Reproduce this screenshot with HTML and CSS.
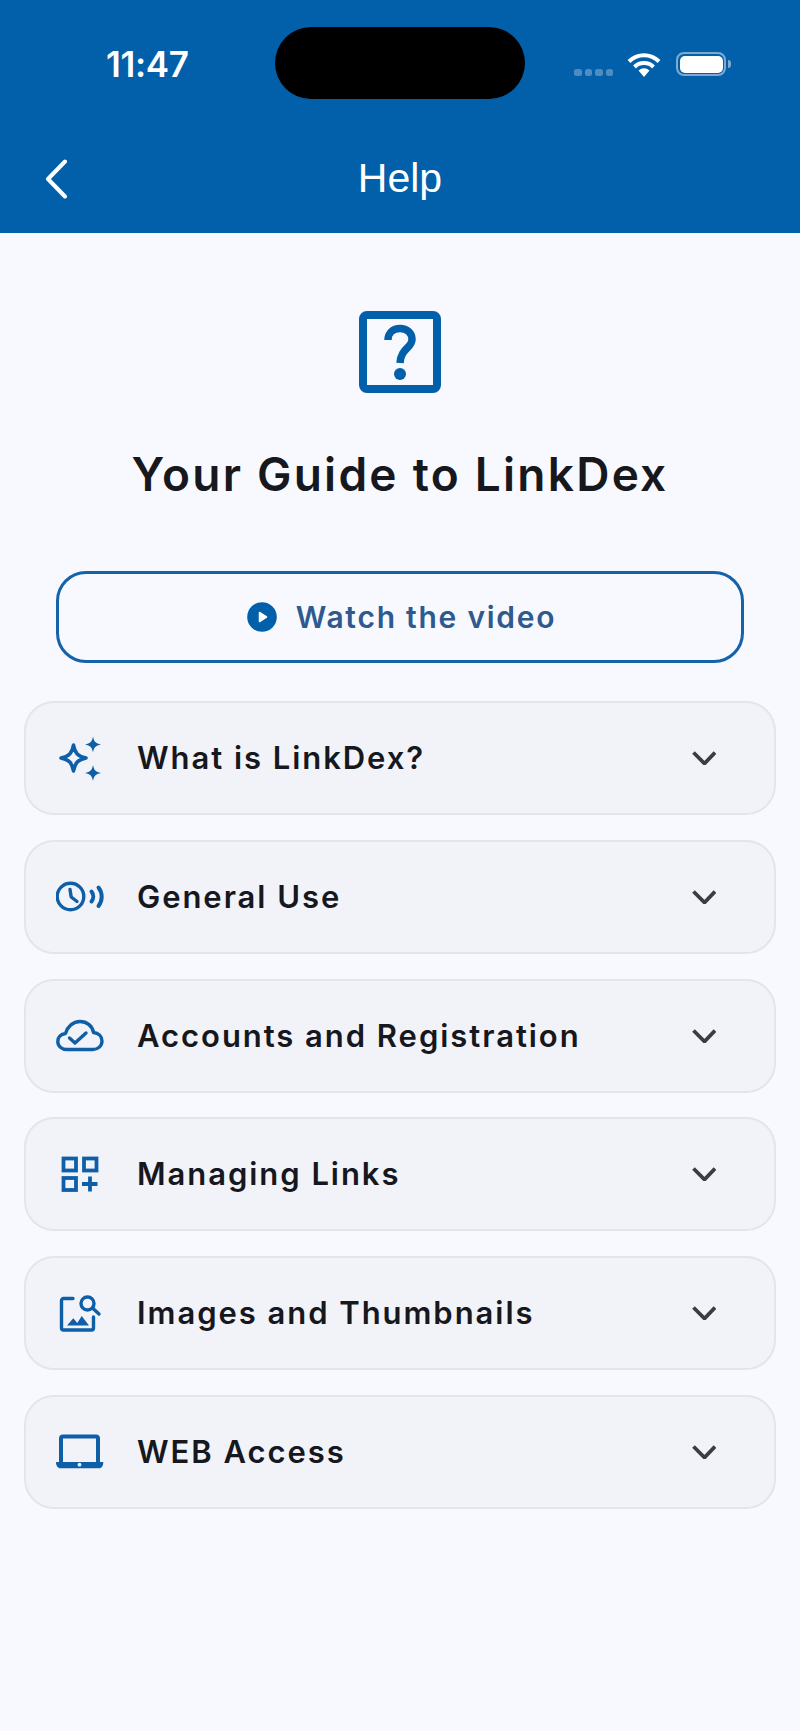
FILE: index.html
```html
<!DOCTYPE html>
<html lang="en">
<head>
<meta charset="utf-8">
<title>Help</title>
<link rel="stylesheet" href="styles.css">
</head>
<body>
<div class="screen">
  <header class="header">
    <div class="status">
      <span class="time">11:47</span>
      <span class="island"></span>
      <div class="status-icons">
        <div class="dots"><i></i><i></i><i></i><i></i></div>
        <svg class="wifi" viewBox="0 0 34 25"><path d="M2 9.500a21 21 0 0 1 30 0" /><path d="M7.500 15a13.500 13.500 0 0 1 19 0" /><path class="wifi-fill" d="M11.500 18.500a8 8 0 0 1 11 0L17 25z"/></svg>
        <div class="battery"><div class="battery-level"></div></div>
        <div class="battery-nub"></div>
      </div>
    </div>
    <div class="navbar">
      <svg class="back" viewBox="0 0 24 40"><path d="M21 2.500 4 20l17 17.500"/></svg>
      <h1 class="nav-title">Help</h1>
    </div>
  </header>
  <main class="content">
    <svg class="help-icon" viewBox="0 0 82 82">
      <rect x="4" y="4" width="74" height="74" rx="4"/>
      <path d="M29 29C29 22 34 17.500 41 17.500C48 17.500 53 22 53 28.500C53 37 42 37 41 52"/>
      <circle cx="41" cy="63" r="6"/>
    </svg>
    <h2 class="title">Your Guide to LinkDex</h2>
    <button class="video">
      <svg class="play" viewBox="0 0 30 30"><circle cx="15" cy="15" r="14.800"/><path d="M12.500 10.500 19.500 15l-7 4.500z"/></svg>
      <span>Watch the video</span>
    </button>
    <div class="list">
      <div class="card">
        <svg class="card-icon" viewBox="0 0 50 50"><path class="hollow" d="M17.500 12C18.800 20 22 23.500 30 25C22 26.500 18.800 30 17.500 38C16.200 30 13 26.500 5 25C13 23.500 16.200 20 17.500 12Z"/><path class="solid" d="M37 3.500C38 8.500 39.500 10.500 45 11.500C39.500 12.500 38 14.500 37 19.500C36 14.500 34.500 12.500 29 11.500C34.500 10.500 36 8.500 37 3.500Z"/><path class="solid" d="M37 32C38 37 39.500 39 45 40C39.500 41 38 43 37 48C36 43 34.500 41 29 40C34.500 39 36 37 37 32Z"/></svg>
        <span class="card-label">What is LinkDex?</span>
        <svg class="chevron" viewBox="0 0 24 14"><path d="M1.500 1.500 12.500 12.500 23 1.500"/></svg>
      </div>
      <div class="card">
        <svg class="card-icon" viewBox="0 0 50 50"><circle class="line" cx="14.500" cy="24.500" r="13.300"/><path class="line" d="M14 17.500 15.200 25 21 29.500"/><path class="line wave" d="M35.500 19.500a8 8 0 0 1 0 10"/><path class="line wave" d="M42.500 15.500a15 15 0 0 1 0 18.500"/></svg>
        <span class="card-label">General Use</span>
        <svg class="chevron" viewBox="0 0 24 14"><path d="M1.500 1.500 12.500 12.500 23 1.500"/></svg>
      </div>
      <div class="card">
        <svg class="card-icon" viewBox="0 0 50 50"><path class="line" d="M11 38.500C5.500 38.500 1.800 35 1.800 30.500C1.800 26 5 23 9.500 22.500C11.500 15.500 17 10.500 24 10.500C31 10.500 36.500 15 37.500 21.500C42.500 22 46 25.500 46 30C46 35 42 38.500 37 38.500Z"/><path class="line" d="M13.500 27 19 32 30 22"/></svg>
        <span class="card-label">Accounts and Registration</span>
        <svg class="chevron" viewBox="0 0 24 14"><path d="M1.500 1.500 12.500 12.500 23 1.500"/></svg>
      </div>
      <div class="card">
        <svg class="card-icon" viewBox="0 0 50 50"><rect class="line square" x="7.500" y="9.500" width="12.500" height="12"/><rect class="line square" x="28" y="9.500" width="12.500" height="12"/><rect class="line square" x="7.500" y="29" width="12.500" height="12"/><path class="line square" d="M34 27.500V42.500M26 35H41.500"/></svg>
        <span class="card-label">Managing Links</span>
        <svg class="chevron" viewBox="0 0 24 14"><path d="M1.500 1.500 12.500 12.500 23 1.500"/></svg>
      </div>
      <div class="card">
        <svg class="card-icon" viewBox="0 0 50 50"><path class="line" d="M17 10.500H7.500A2 2 0 0 0 5.500 12.500V40A2 2 0 0 0 7.500 42H35.500A2 2 0 0 0 37.500 40V29"/><circle class="line" cx="31.500" cy="15.500" r="6.500"/><path class="line" d="M36.500 20 43 26"/><path class="solid" d="M11 37.500 17.300 30.300 21.300 35 25.700 28 33 37.500Z"/></svg>
        <span class="card-label">Images and Thumbnails</span>
        <svg class="chevron" viewBox="0 0 24 14"><path d="M1.500 1.500 12.500 12.500 23 1.500"/></svg>
      </div>
      <div class="card">
        <svg class="card-icon" viewBox="0 0 50 50"><path class="line laptop" d="M5 34.500V11.500A2 2 0 0 1 7 9.500H40A2 2 0 0 1 42 11.500V34.500"/><path class="solid" d="M0 35H47.300C47.300 39 45.500 41.300 43 41.300H4.500C2 41.300 0 39 0 35Z"/><circle class="dot" cx="23.500" cy="37.700" r="1.900"/></svg>
        <span class="card-label">WEB Access</span>
        <svg class="chevron" viewBox="0 0 24 14"><path d="M1.500 1.500 12.500 12.500 23 1.500"/></svg>
      </div>
    </div>
  </main>
</div>
</body>
</html>
```
FILE: styles.css
```css
* { box-sizing: border-box; }
html, body { margin: 0; padding: 0; }
body { background: #f8f9fe; font-family: Inter, "Liberation Sans", sans-serif; }
.screen { width: 800px; height: 1731px; overflow: hidden; display: flex; flex-direction: column; }

.header { background: #0260aa; height: 233px; flex: none; color: #fff; }
.status { display: flex; align-items: flex-start; height: 142px; padding: 27px 0 0 106px; }
.time { width: 169px; margin-top: 19px; font-size: 35px; line-height: 36px; font-weight: 600; letter-spacing: -0.3px; }
.island { width: 250px; height: 72px; background: #000; border-radius: 36px / 36px; }
.status-icons { display: flex; align-items: flex-start; margin-left: 49px; margin-top: 25px; }
.dots { display: flex; gap: 3px; margin-top: 17px; }
.dots i { width: 7.500px; height: 7px; border-radius: 2.500px; background: #4f8cc1; }
.wifi { width: 34px; height: 25px; margin-left: 14px; fill: none; stroke: #fff; stroke-width: 4px; }
.wifi-fill { fill: #fff; stroke: none; }
.battery { width: 50px; height: 24px; margin-left: 15px; border: 2px solid #7fa9d0; border-radius: 8px; padding: 1.500px; }
.battery-level { width: 100%; height: 100%; background: #fff; border-radius: 5px; }
.battery-nub { width: 3px; height: 8px; margin: 8px 0 0 2px; background: #7fa9d0; border-radius: 0 3px 3px 0; }

.navbar { position: relative; display: flex; justify-content: center; align-items: center; height: 72px; }
.back { position: absolute; left: 44px; top: 17px; width: 24px; height: 40px; fill: none; stroke: #fff; stroke-width: 4px; stroke-linecap: round; stroke-linejoin: round; }
.nav-title { margin: 0; font-family: "Liberation Sans", Arial, sans-serif; font-size: 41px; line-height: 50px; font-weight: 400; }

.content { display: flex; flex-direction: column; align-items: center; padding: 78px 24px 0; }
.help-icon { width: 82px; height: 82px; flex: none; }
.help-icon rect { fill: none; stroke: #0260aa; stroke-width: 8px; }
.help-icon path { fill: none; stroke: #0260aa; stroke-width: 7.500px; }
.help-icon circle { fill: #0260aa; }

.title { margin: 54px 0 0; font-size: 46px; line-height: 54px; font-weight: 600; letter-spacing: 2.250px; color: #16181d; }

.video { display: flex; align-items: center; justify-content: center; gap: 19px; width: 688px; height: 92px; margin-top: 70px; padding: 0 0 0 3px; background: transparent; border: 3px solid #1362aa; border-radius: 30px; font: inherit; }
.video span { font-size: 30px; line-height: 36px; font-weight: 600; letter-spacing: 1.750px; color: #2f5a90; }
.play { width: 30px; height: 30px; flex: none; }
.play circle { fill: #0260aa; }
.play path { fill: #fff; stroke: #fff; stroke-width: 1.500px; stroke-linejoin: round; }

.list { display: flex; flex-direction: column; gap: 24.800px; width: 752px; margin-top: 38px; }
.card { display: flex; align-items: center; height: 114px; padding: 0 58px 0 30px; background: #f2f3f9; border: 2px solid #e4e5ea; border-radius: 30px; }
.card-icon { width: 50px; height: 50px; flex: none; }
.card-label { flex: 1; margin-left: 31px; font-size: 31px; line-height: 38px; font-weight: 600; letter-spacing: 1.950px; color: #16181d; }
.chevron { width: 24px; height: 14px; flex: none; fill: none; stroke: #3b3d42; stroke-width: 3.800px; }
.line { fill: none; stroke: #0f5fa8; stroke-width: 3.400px; stroke-linecap: round; stroke-linejoin: round; }
.line.wave { stroke-width: 4px; }
.line.laptop { stroke-width: 4px; }
.line.square { stroke-width: 3.800px; stroke-linecap: butt; stroke-linejoin: miter; }
.hollow { fill: none; stroke: #0f5fa8; stroke-width: 3.600px; stroke-linejoin: round; }
.solid { fill: #0f5fa8; }
.dot { fill: #f2f3f9; }
```
